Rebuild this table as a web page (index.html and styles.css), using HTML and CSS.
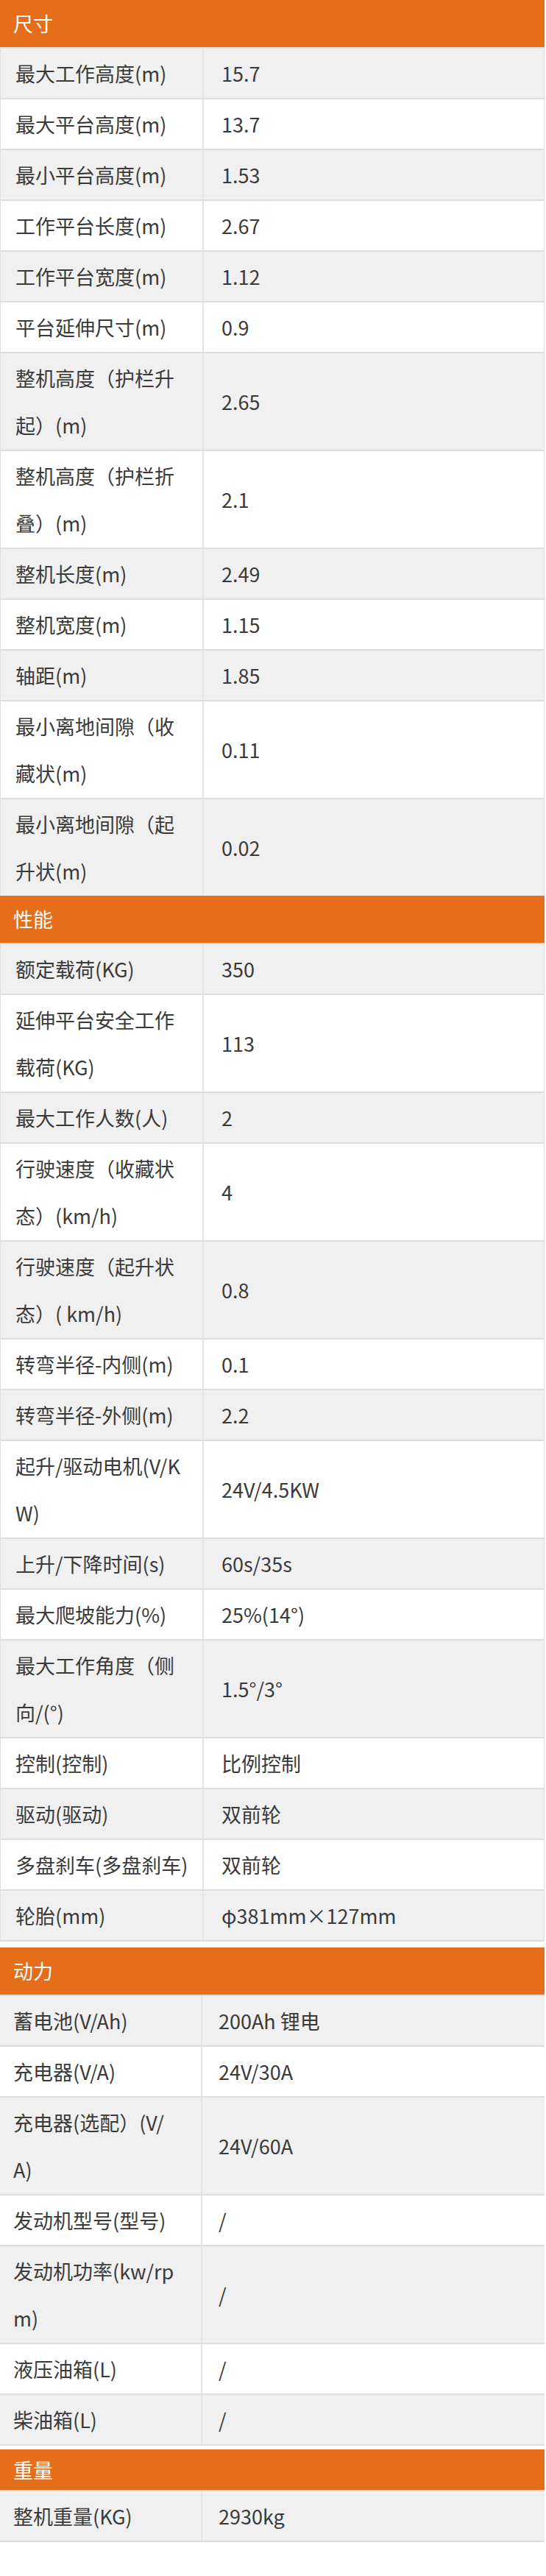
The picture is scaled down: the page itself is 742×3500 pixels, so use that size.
FILE: index.html
```html
<!DOCTYPE html>
<html lang="zh-CN">
<head>
<meta charset="utf-8">
<title>产品参数</title>
<link rel="stylesheet" href="styles.css">
</head>
<body>
<main class="sheet">
  <section class="spec spec--framed">
    <h2 class="spec__head">尺寸</h2>
    <div class="spec__row"><div class="spec__key">最大工作高度(m)</div><div class="spec__val">15.7</div></div>
    <div class="spec__row"><div class="spec__key">最大平台高度(m)</div><div class="spec__val">13.7</div></div>
    <div class="spec__row"><div class="spec__key">最小平台高度(m)</div><div class="spec__val">1.53</div></div>
    <div class="spec__row"><div class="spec__key">工作平台长度(m)</div><div class="spec__val">2.67</div></div>
    <div class="spec__row"><div class="spec__key">工作平台宽度(m)</div><div class="spec__val">1.12</div></div>
    <div class="spec__row"><div class="spec__key">平台延伸尺寸(m)</div><div class="spec__val">0.9</div></div>
    <div class="spec__row"><div class="spec__key">整机高度（护栏升起）(m)</div><div class="spec__val">2.65</div></div>
    <div class="spec__row"><div class="spec__key">整机高度（护栏折叠）(m)</div><div class="spec__val">2.1</div></div>
    <div class="spec__row"><div class="spec__key">整机长度(m)</div><div class="spec__val">2.49</div></div>
    <div class="spec__row"><div class="spec__key">整机宽度(m)</div><div class="spec__val">1.15</div></div>
    <div class="spec__row"><div class="spec__key">轴距(m)</div><div class="spec__val">1.85</div></div>
    <div class="spec__row"><div class="spec__key">最小离地间隙（收藏状(m)</div><div class="spec__val">0.11</div></div>
    <div class="spec__row"><div class="spec__key">最小离地间隙（起升状(m)</div><div class="spec__val">0.02</div></div>
  </section>

  <section class="spec spec--framed spec--closed spec--gap-lg">
    <h2 class="spec__head">性能</h2>
    <div class="spec__row"><div class="spec__key">额定载荷(KG)</div><div class="spec__val">350</div></div>
    <div class="spec__row"><div class="spec__key">延伸平台安全工作载荷(KG)</div><div class="spec__val">113</div></div>
    <div class="spec__row"><div class="spec__key">最大工作人数(人)</div><div class="spec__val">2</div></div>
    <div class="spec__row"><div class="spec__key">行驶速度（收藏状态）(km/h)</div><div class="spec__val">4</div></div>
    <div class="spec__row"><div class="spec__key">行驶速度（起升状态）( km/h)</div><div class="spec__val">0.8</div></div>
    <div class="spec__row"><div class="spec__key">转弯半径-内侧(m)</div><div class="spec__val">0.1</div></div>
    <div class="spec__row"><div class="spec__key">转弯半径-外侧(m)</div><div class="spec__val">2.2</div></div>
    <div class="spec__row"><div class="spec__key">起升/驱动电机(V/KW)</div><div class="spec__val">24V/4.5KW</div></div>
    <div class="spec__row"><div class="spec__key">上升/下降时间(s)</div><div class="spec__val">60s/35s</div></div>
    <div class="spec__row"><div class="spec__key">最大爬坡能力(%)</div><div class="spec__val">25%(14°)</div></div>
    <div class="spec__row"><div class="spec__key">最大工作角度（侧向/(°)</div><div class="spec__val">1.5°/3°</div></div>
    <div class="spec__row"><div class="spec__key">控制(控制)</div><div class="spec__val">比例控制</div></div>
    <div class="spec__row"><div class="spec__key">驱动(驱动)</div><div class="spec__val">双前轮</div></div>
    <div class="spec__row"><div class="spec__key">多盘刹车(多盘刹车)</div><div class="spec__val">双前轮</div></div>
    <div class="spec__row"><div class="spec__key">轮胎(mm)</div><div class="spec__val">φ381mm×127mm</div></div>
  </section>

  <section class="spec spec--narrow spec--closed spec--gap-sm">
    <h2 class="spec__head">动力</h2>
    <div class="spec__row"><div class="spec__key">蓄电池(V/Ah)</div><div class="spec__val">200Ah 锂电</div></div>
    <div class="spec__row"><div class="spec__key">充电器(V/A)</div><div class="spec__val">24V/30A</div></div>
    <div class="spec__row"><div class="spec__key">充电器(选配）(V/<br>A)</div><div class="spec__val">24V/60A</div></div>
    <div class="spec__row"><div class="spec__key">发动机型号(型号)</div><div class="spec__val">/</div></div>
    <div class="spec__row"><div class="spec__key">发动机功率(kw/rp<br>m)</div><div class="spec__val">/</div></div>
    <div class="spec__row"><div class="spec__key">液压油箱(L)</div><div class="spec__val">/</div></div>
    <div class="spec__row"><div class="spec__key">柴油箱(L)</div><div class="spec__val">/</div></div>
  </section>

  <section class="spec spec--narrow spec--closed">
    <h2 class="spec__head spec__head--compact">重量</h2>
    <div class="spec__row"><div class="spec__key">整机重量(KG)</div><div class="spec__val">2930kg</div></div>
  </section>
</main>
</body>
</html>
```

FILE: styles.css
```css
* {
  box-sizing: border-box;
}

body {
  margin: 0;
  background: #ffffff;
  color: #3a3a3a;
  font-family: "Noto Sans CJK SC", "Noto Sans", sans-serif;
  font-size: 27px;
}

.sheet {
  width: 740px;
}

.spec {
  --key-col: 275px;
  --key-pl: 18px;
  --key-pr: 22px;
  --val-pl: 22px;
}

.spec--framed {
  --key-col: 276px;
  --key-pl: 20px;
  --key-pr: 18px;
  --val-pl: 24px;
}

.spec--closed {
  border-bottom: 2px solid #dedede;
}

.spec--gap-lg {
  margin-bottom: 8px;
}

.spec--gap-sm {
  margin-bottom: 5px;
}

.spec__head {
  margin: 0;
  height: 64px;
  padding-left: 18px;
  background: #e56e1a;
  color: #ffffff;
  font-size: 27px;
  font-weight: 400;
  line-height: 64px;
}

.spec__head--compact {
  height: 55px;
  line-height: 55px;
}

.spec__row {
  display: grid;
  grid-template-columns: var(--key-col) 1fr;
  border-top: 2px solid #dedede;
  background: #ffffff;
}

.spec--framed .spec__row {
  border-left: 1px solid #dedede;
  border-right: 1px solid #dedede;
}

.spec__row:nth-of-type(odd) {
  background: #f0f0f0;
}

.spec__key {
  padding: 2px var(--key-pr) 1px var(--key-pl);
  border-right: 2px solid #e4e4e4;
  line-height: 64px;
  word-break: break-all;
}

.spec__val {
  display: flex;
  align-items: center;
  padding: 2px 20px 1px var(--val-pl);
  line-height: 64px;
}
```
